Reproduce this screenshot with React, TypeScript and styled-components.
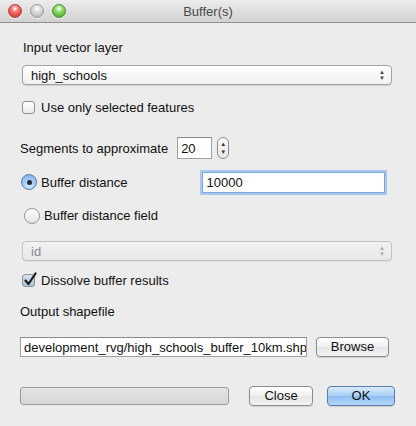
import React from "react";
import styled, { createGlobalStyle } from "styled-components";

const GlobalStyle = createGlobalStyle`
  html, body {
    margin: 0;
    padding: 0;
    background: #ececec;
  }
  body {
    font-family: "Liberation Sans", Arial, sans-serif;
    font-size: 13px;
    color: #111;
  }
`;

const Window = styled.div`
  width: 416px;
  height: 426px;
  background: #ececec;
  display: flex;
  flex-direction: column;
  overflow: hidden;
`;

const TitleBar = styled.div`
  height: 22px;
  flex: none;
  display: flex;
  align-items: center;
  position: relative;
  background: linear-gradient(#ececec, #d2d2d2);
  border-bottom: 1px solid #8e8e8e;
  border-radius: 4px 4px 0 0;
`;

const Lights = styled.div`
  display: flex;
  gap: 8px;
  padding-left: 8px;
  margin-top: -1px;
`;

const Light = styled.span<{ $c1: string; $c2: string; $edge: string }>`
  width: 12px;
  height: 12px;
  border-radius: 50%;
  border: 1px solid ${(p) => p.$edge};
  background: radial-gradient(circle at 50% 30%, #fff 0, ${(p) => p.$c1} 35%, ${(p) => p.$c2} 90%);
  box-shadow: 0 1px 0 rgba(255, 255, 255, 0.6);
`;

const Title = styled.div`
  position: absolute;
  left: 0;
  right: 0;
  text-align: center;
  color: #4a4a4a;
  font-size: 13px;
  pointer-events: none;
`;

const Body = styled.div`
  display: flex;
  flex-direction: column;
  padding-top: 16px;
`;

const Row = styled.div<{ $mt?: number; $h: number; $ml?: number }>`
  display: flex;
  align-items: center;
  height: ${(p) => p.$h}px;
  margin-top: ${(p) => p.$mt ?? 0}px;
  margin-left: ${(p) => p.$ml ?? 0}px;
`;

const Label = styled.span<{ $ml?: number }>`
  margin-left: ${(p) => p.$ml ?? 0}px;
  white-space: nowrap;
`;

const Combo = styled.div<{ $disabled?: boolean }>`
  width: 370px;
  height: 20px;
  box-sizing: border-box;
  margin-left: 22px;
  display: flex;
  align-items: center;
  justify-content: space-between;
  padding: 0 6px 0 8px;
  border: 1px solid ${(p) => (p.$disabled ? "#c2c2c2" : "#a2a2a2")};
  border-radius: 4px;
  background: ${(p) =>
    p.$disabled ? "linear-gradient(#f2f2f2, #e9e9e9)" : "linear-gradient(#ffffff, #f1f1f1)"};
  color: ${(p) => (p.$disabled ? "#8a8a8a" : "#111")};
  box-shadow: 0 1px 1px rgba(0, 0, 0, ${(p) => (p.$disabled ? 0.05 : 0.12)});
`;

const Arrows = styled.span<{ $disabled?: boolean }>`
  display: flex;
  flex-direction: column;
  align-items: center;
  font-size: 6px;
  line-height: 6px;
  color: ${(p) => (p.$disabled ? "#a8a8a8" : "#444")};
`;

const CheckBox = styled.span<{ $checked?: boolean }>`
  width: 13px;
  height: 13px;
  flex: none;
  box-sizing: border-box;
  border: 1px solid #8f8f8f;
  border-radius: 3px;
  background: ${(p) =>
    p.$checked ? "linear-gradient(#d6e4f3, #a9c2df)" : "linear-gradient(#ffffff, #ececec)"};
  position: relative;
  svg {
    position: absolute;
    left: 0px;
    top: -3px;
  }
`;

const Radio = styled.span<{ $on?: boolean; $size: number }>`
  width: ${(p) => p.$size}px;
  height: ${(p) => p.$size}px;
  flex: none;
  box-sizing: border-box;
  border-radius: 50%;
  border: 1px solid ${(p) => (p.$on ? "#5b7fae" : "#969696")};
  background: ${(p) =>
    p.$on ? "radial-gradient(circle at 50% 75%, #d5ebff 0, #8fbbee 70%, #6c9ad6 100%)" : "linear-gradient(#ffffff, #e4e4e4)"};
  display: flex;
  align-items: center;
  justify-content: center;
  &::after {
    content: "";
    display: ${(p) => (p.$on ? "block" : "none")};
    width: 5px;
    height: 5px;
    border-radius: 50%;
    background: #1b2a3c;
  }
`;

const TextBox = styled.div<{ $w: number; $h: number; $ml: number; $focus?: boolean }>`
  width: ${(p) => p.$w}px;
  height: ${(p) => p.$h}px;
  margin-left: ${(p) => p.$ml}px;
  box-sizing: border-box;
  background: #fff;
  border: 1px solid ${(p) => (p.$focus ? "#7ea6d8" : "#a0a0a0")};
  border-top-color: ${(p) => (p.$focus ? "#7ea6d8" : "#8a8a8a")};
  box-shadow: ${(p) => (p.$focus ? "0 0 0 2px #a9c8ee" : "none")};
  display: flex;
  align-items: center;
  padding-left: 3px;
  overflow: hidden;
  white-space: nowrap;
`;

const Spin = styled.div`
  width: 12px;
  height: 22px;
  margin-left: 5px;
  box-sizing: border-box;
  border: 1px solid #8e8e8e;
  border-radius: 6px;
  background: linear-gradient(#fdfdfd, #e6e6e6);
  display: flex;
  flex-direction: column;
  align-items: center;
  justify-content: center;
  font-size: 6px;
  line-height: 8px;
  color: #333;
`;

const Button = styled.div<{ $w: number; $ml: number; $primary?: boolean }>`
  width: ${(p) => p.$w}px;
  height: 20px;
  margin-left: ${(p) => p.$ml}px;
  box-sizing: border-box;
  border: 1px solid ${(p) => (p.$primary ? "#5a7db0" : "#8c8c8c")};
  border-radius: 4px;
  background: ${(p) =>
    p.$primary ? "linear-gradient(#d9ebfc, #a6cdf4 50%, #8ebff1 51%, #b5d8fa)" : "linear-gradient(#ffffff, #f0f0f0 50%, #e6e6e6 51%, #f2f2f2)"};
  box-shadow: 0 1px 1px rgba(0, 0, 0, 0.12);
  display: flex;
  align-items: center;
  justify-content: center;
  padding-bottom: 1px;
`;

const Progress = styled.div`
  width: 209px;
  height: 18px;
  margin-left: 20px;
  box-sizing: border-box;
  border: 1px solid #9a9a9a;
  border-radius: 3px;
  background: linear-gradient(#e4e4e4, #d6d6d6);
`;

const CheckMark = () => (
  <svg width="14" height="15" viewBox="0 0 14 15">
    <path d="M2.5 8.5 L5.5 12 L12.5 1.5" fill="none" stroke="#1a1a1a" strokeWidth="2.2" strokeLinecap="round" strokeLinejoin="round" />
  </svg>
);

export default function App() {
  return (
    <>
      <GlobalStyle />
      <Window>
        <TitleBar>
          <Lights>
            <Light $c1="#f4706a" $c2="#d7312a" $edge="#b5403a" />
            <Light $c1="#dcdcdc" $c2="#b4b4b4" $edge="#9b9b9b" />
            <Light $c1="#8fdc6a" $c2="#3fa525" $edge="#4d8f35" />
          </Lights>
          <Title>Buffer(s)</Title>
        </TitleBar>
        <Body>
          <Row $h={16}>
            <Label $ml={23}>Input vector layer</Label>
          </Row>
          <Row $mt={10} $h={20}>
            <Combo>
              <span>high_schools</span>
              <Arrows>
                <span>▲</span>
                <span>▼</span>
              </Arrows>
            </Combo>
          </Row>
          <Row $mt={14} $h={16} $ml={22}>
            <CheckBox />
            <Label $ml={6}>Use only selected features</Label>
          </Row>
          <Row $mt={22} $h={22} $ml={20}>
            <Label>Segments to approximate</Label>
            <TextBox $w={35} $h={22} $ml={9}>20</TextBox>
            <Spin>
              <span>▲</span>
              <span>▼</span>
            </Spin>
          </Row>
          <Row $mt={12} $h={22} $ml={21}>
            <Radio $on $size={16} />
            <Label $ml={4}>Buffer distance</Label>
            <TextBox $w={183} $h={21} $ml={75} $focus>10000</TextBox>
          </Row>
          <Row $mt={14} $h={17} $ml={24}>
            <Radio $size={16} />
            <Label $ml={4}>Buffer distance field</Label>
          </Row>
          <Row $mt={17} $h={20}>
            <Combo $disabled>
              <span>id</span>
              <Arrows $disabled>
                <span>▲</span>
                <span>▼</span>
              </Arrows>
            </Combo>
          </Row>
          <Row $mt={12} $h={15} $ml={22}>
            <CheckBox $checked>
              <CheckMark />
            </CheckBox>
            <Label $ml={6}>Dissolve buffer results</Label>
          </Row>
          <Row $mt={15} $h={16}>
            <Label $ml={20}>Output shapefile</Label>
          </Row>
          <Row $mt={18} $h={20}>
            <TextBox $w={287} $h={20} $ml={20}>development_rvg/high_schools_buffer_10km.shp</TextBox>
            <Button $w={73} $ml={9}>Browse</Button>
          </Row>
          <Row $mt={29} $h={20}>
            <Progress />
            <Button $w={64} $ml={20}>Close</Button>
            <Button $w={68} $ml={14} $primary>OK</Button>
          </Row>
        </Body>
      </Window>
    </>
  );
}
